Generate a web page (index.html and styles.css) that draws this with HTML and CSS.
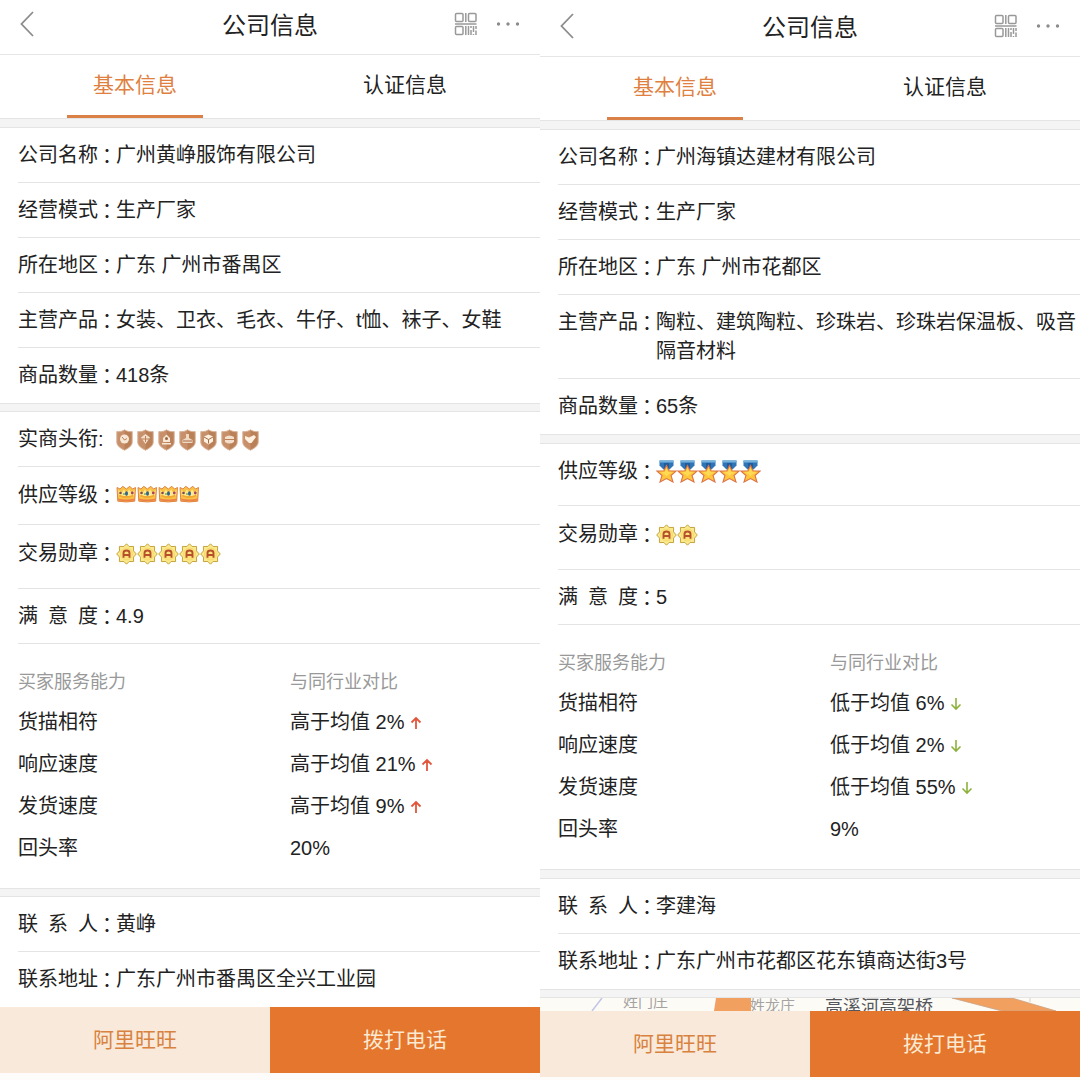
FILE: index.html
```html
<!DOCTYPE html>
<html lang="zh-CN">
<head>
<meta charset="utf-8">
<meta name="viewport" content="width=device-width, initial-scale=1">
<title>公司信息</title>
<link rel="stylesheet" href="styles.css">
</head>
<body>
<svg class="sprite" aria-hidden="true">
  <symbol id="back" viewBox="0 0 14 26"><path d="M13 1 1.500 13 13 25" fill="none" stroke="#8c8c8c" stroke-width="1.800"/></symbol>
  <symbol id="qr" viewBox="0 0 24 24">
    <g fill="none" stroke="#999" stroke-width="1.500">
      <rect x="1.500" y="1.500" width="7.500" height="8" rx="1"/><rect x="14.500" y="1.500" width="7.500" height="8" rx="1"/><rect x="1.500" y="14.500" width="7.500" height="8" rx="1"/>
      <path d="M11.800 1v9M1 12h21.500M11.800 14v9M14.500 14v9M17 14v2m0 2v5M19.500 14v6m0 2v1M22 14v3m0 1.500V23"/>
    </g>
  </symbol>
  <symbol id="dots" viewBox="0 0 24 6"><g fill="#8c8c8c"><circle cx="2.500" cy="3" r="1.700"/><circle cx="12" cy="3" r="1.700"/><circle cx="21.500" cy="3" r="1.700"/></g></symbol>
  <symbol id="up" viewBox="0 0 12 14"><path d="M6 13V2M1.500 6.500 6 2l4.500 4.500" fill="none" stroke="#e2563c" stroke-width="1.800"/></symbol>
  <symbol id="down" viewBox="0 0 12 14"><path d="M6 1v11M1.500 7.500 6 12l4.500-4.500" fill="none" stroke="#8cb23c" stroke-width="1.600"/></symbol>
  <symbol id="shield" viewBox="0 0 21 22">
    <path d="M8.500.8C6.500 2.300 3.500 3 .8 2.600V13c0 4 4 6.300 7.700 8.200 3.700-1.900 7.700-4.200 7.700-8.200V2.600C13.500 3 10.500 2.300 8.500.8Z" fill="#c8906a" stroke="#d9b296" stroke-width="1"/>
    <path d="M8.500 1.500c2 1.300 4.500 2 7 1.800V13c0 3.500-3.500 5.600-7 7.500Z" fill="#ba8058"/>
  </symbol>
  <symbol id="crown" viewBox="0 0 21 18">
    <path d="M1 2.500 4 4l2.800-2.700L10.300 4l3.500-2.700L16.500 4l3-1.500-.8 13.700q-8.400 1.500-16.900 0Z" fill="#f9c247" stroke="#e08545" stroke-width="1"/>
    <path d="M2.300 5 5.500 8 8 4.500 10.300 8l3-3.500L15.500 8l3-3-.6 6H3Z" fill="#ffe98b"/>
    <path d="M2 13.500q8.300 2 16.700 0l-.3 2q-8 1.300-16 0Z" fill="#ec8048"/>
    <path d="M3.200 10.500 8 12l5-.2 4.500-1.300" fill="none" stroke="#f2a832" stroke-width="1.800"/>
    <circle cx="4.500" cy="8" r="1.300" fill="#7b4a57"/><ellipse cx="10.500" cy="8.500" rx="1.500" ry="2.300" fill="#34618b"/><circle cx="16.300" cy="8" r="1.400" fill="#a64261"/><circle cx="8" cy="9" r="1" fill="#7eaa62"/>
  </symbol>
  <symbol id="seal" viewBox="0 0 21 22">
    <path d="m10.500.8 2.600 2.700 4.500-.1-.1 4.500 2.800 3.100-2.800 3.100.1 4.500-4.500-.1-2.600 2.700-2.600-2.700-4.500.1.100-4.500L.7 11l2.800-3.100-.1-4.500 4.500.1Z" fill="#fbe98e" stroke="#c4a43e" stroke-width="1"/>
    <circle cx="10.500" cy="11" r="6" fill="#ffe27a" stroke="#f1d76c" stroke-width=".8"/>
    <path d="M7.500 14.800V10q0-2.500 3-2.500t3 2.500v4.800M7.500 12h6" fill="none" stroke="#b4502b" stroke-width="1.900"/>
  </symbol>
  <symbol id="star" viewBox="0 0 21 23">
    <path d="M3.500.5h14v5l-4 4h-6l-4-4Z" fill="#2e75b8"/><path d="M3.500.5h14v2h-14Z" fill="#75b3dc"/><path d="M8 3h5v6H8Z" fill="#205c9b"/>
    <path d="m10.500 5.500 2.500 5.200 7 .4-5 4.400 2 6.500-6.500-3.500L4 22l2-6.500-5-4.400 7-.4Z" fill="#ffc63b" stroke="#dc7447" stroke-width="1.100"/>
    <path d="m10.500 8 1.500 4 4.500.5-4.500 2-1.500 2-1.500-2-4.500-2L9 12Z" fill="#ffdb55"/>
  </symbol>
</svg>

<main class="compare">
  <article class="phone">
    <header class="bar">
      <button class="icon-btn" type="button" aria-label="返回"><svg width="14" height="26"><use href="#back"/></svg></button>
      <h1 class="title">公司信息</h1>
      <div class="tools">
        <button class="icon-btn" type="button" aria-label="二维码"><svg width="24" height="24"><use href="#qr"/></svg></button>
        <button class="icon-btn" type="button" aria-label="更多"><svg width="24" height="6"><use href="#dots"/></svg></button>
      </div>
    </header>
    <nav class="tabs"><a class="tab active" href="#basic-1">基本信息</a><a class="tab" href="#cert-1">认证信息</a></nav>
    <div class="group" id="basic-1">
      <dl>
        <div class="row"><dt><span class="name">公司名称</span><span class="colon">：</span></dt><dd>广州黄峥服饰有限公司</dd></div>
        <div class="row"><dt><span class="name">经营模式</span><span class="colon">：</span></dt><dd>生产厂家</dd></div>
        <div class="row"><dt><span class="name">所在地区</span><span class="colon">：</span></dt><dd>广东 广州市番禺区</dd></div>
        <div class="row"><dt><span class="name">主营产品</span><span class="colon">：</span></dt><dd>女装、卫衣、毛衣、牛仔、t恤、袜子、女鞋</dd></div>
        <div class="row last"><dt><span class="name">商品数量</span><span class="colon">：</span></dt><dd>418条</dd></div>
      </dl>
    </div>
    <div class="group">
      <dl>
        <div class="row"><dt><span class="name">实商头衔</span><span class="half-colon">:</span></dt><dd class="badges">
          <svg width="21" height="22"><use href="#shield"/><circle cx="8.500" cy="10" r="4.500" fill="#f7e7d6"/><path d="m6 8 2.500 3L11 9.500" fill="none" stroke="#bd8056"/></svg>
          <svg width="21" height="22"><use href="#shield"/><path d="M4 8.500 8.500 5 13 8.500 8.500 15Z" fill="#f3dfcc"/><path d="M5 10h7M8.500 7v6" stroke="#bd8056"/></svg>
          <svg width="21" height="22"><use href="#shield"/><path d="M5 13V9l3.500-3.500L12 9v4ZM4 14h9v1.500H4Z" fill="#f7e7d6"/><circle cx="8.500" cy="9.500" r="1.500" fill="#9c6541"/></svg>
          <svg width="21" height="22"><use href="#shield"/><path d="M7 5h3v4l3.500 2v3h-10v-3L7 9Z" fill="#f0d9c3"/><path d="M4 12h9" stroke="#a66a42"/></svg>
          <svg width="21" height="22"><use href="#shield"/><path d="m8.500 5.500 4.500 2v5l-4.500 3-4.500-3v-5Z" fill="#fff0df"/><path d="m4 8 4.500 2.500L13 8M8.500 10.500v4" fill="none" stroke="#a66a42"/></svg>
          <svg width="21" height="22"><use href="#shield"/><path d="M4 8q4.500-3 9 0v5q-4.500 3-9 0Z" fill="#f3dfcc"/><path d="M4 10.500h9" stroke="#bd8056"/></svg>
          <svg width="21" height="22"><use href="#shield"/><path d="m3 7 4 1.500L12 6l2 2-4.500 6H7L3 10Z" fill="#fff0df"/></svg>
        </dd></div>
        <div class="row crown-row"><dt><span class="name">供应等级</span><span class="colon">：</span></dt><dd class="badges raised">
          <svg width="21" height="18"><use href="#crown"/></svg><svg width="21" height="18"><use href="#crown"/></svg><svg width="21" height="18"><use href="#crown"/></svg><svg width="21" height="18"><use href="#crown"/></svg>
        </dd></div>
        <div class="row medal-row"><dt><span class="name">交易勋章</span><span class="colon">：</span></dt><dd class="badges">
          <svg width="21" height="22"><use href="#seal"/></svg><svg width="21" height="22"><use href="#seal"/></svg><svg width="21" height="22"><use href="#seal"/></svg><svg width="21" height="22"><use href="#seal"/></svg><svg width="21" height="22"><use href="#seal"/></svg>
        </dd></div>
        <div class="row"><dt><span class="name spread">满 意 度</span><span class="colon">：</span></dt><dd>4.9</dd></div>
      </dl>
      <table class="stats">
        <thead><tr><th scope="col">买家服务能力</th><th scope="col">与同行业对比</th></tr></thead>
        <tbody>
          <tr><td>货描相符</td><td>高于均值 2% <svg class="arrow" width="12" height="14"><use href="#up"/></svg></td></tr>
          <tr><td>响应速度</td><td>高于均值 21% <svg class="arrow" width="12" height="14"><use href="#up"/></svg></td></tr>
          <tr><td>发货速度</td><td>高于均值 9% <svg class="arrow" width="12" height="14"><use href="#up"/></svg></td></tr>
          <tr><td>回头率</td><td>20%</td></tr>
        </tbody>
      </table>
    </div>
    <div class="group">
      <dl>
        <div class="row"><dt><span class="name spread">联 系 人</span><span class="colon">：</span></dt><dd>黄峥</dd></div>
        <div class="row last"><dt><span class="name">联系地址</span><span class="colon">：</span></dt><dd>广东广州市番禺区全兴工业园</dd></div>
      </dl>
    </div>
    <footer class="actions"><button class="action chat" type="button">阿里旺旺</button><button class="action call" type="button">拨打电话</button></footer>
  </article>

  <article class="phone lower">
    <header class="bar">
      <button class="icon-btn" type="button" aria-label="返回"><svg width="14" height="26"><use href="#back"/></svg></button>
      <h1 class="title">公司信息</h1>
      <div class="tools">
        <button class="icon-btn" type="button" aria-label="二维码"><svg width="24" height="24"><use href="#qr"/></svg></button>
        <button class="icon-btn" type="button" aria-label="更多"><svg width="24" height="6"><use href="#dots"/></svg></button>
      </div>
    </header>
    <nav class="tabs"><a class="tab active" href="#basic-2">基本信息</a><a class="tab" href="#cert-2">认证信息</a></nav>
    <div class="group" id="basic-2">
      <dl>
        <div class="row"><dt><span class="name">公司名称</span><span class="colon">：</span></dt><dd>广州海镇达建材有限公司</dd></div>
        <div class="row"><dt><span class="name">经营模式</span><span class="colon">：</span></dt><dd>生产厂家</dd></div>
        <div class="row"><dt><span class="name">所在地区</span><span class="colon">：</span></dt><dd>广东 广州市花都区</dd></div>
        <div class="row"><dt><span class="name">主营产品</span><span class="colon">：</span></dt><dd>陶粒、建筑陶粒、珍珠岩、珍珠岩保温板、吸音隔音材料</dd></div>
        <div class="row last"><dt><span class="name">商品数量</span><span class="colon">：</span></dt><dd>65条</dd></div>
      </dl>
    </div>
    <div class="group">
      <dl>
        <div class="row star-row"><dt><span class="name">供应等级</span><span class="colon">：</span></dt><dd class="badges">
          <svg width="21" height="23"><use href="#star"/></svg><svg width="21" height="23"><use href="#star"/></svg><svg width="21" height="23"><use href="#star"/></svg><svg width="21" height="23"><use href="#star"/></svg><svg width="21" height="23"><use href="#star"/></svg>
        </dd></div>
        <div class="row medal-row"><dt><span class="name">交易勋章</span><span class="colon">：</span></dt><dd class="badges">
          <svg width="21" height="22"><use href="#seal"/></svg><svg width="21" height="22"><use href="#seal"/></svg>
        </dd></div>
        <div class="row"><dt><span class="name spread">满 意 度</span><span class="colon">：</span></dt><dd>5</dd></div>
      </dl>
      <table class="stats">
        <thead><tr><th scope="col">买家服务能力</th><th scope="col">与同行业对比</th></tr></thead>
        <tbody>
          <tr><td>货描相符</td><td>低于均值 6% <svg class="arrow" width="12" height="14"><use href="#down"/></svg></td></tr>
          <tr><td>响应速度</td><td>低于均值 2% <svg class="arrow" width="12" height="14"><use href="#down"/></svg></td></tr>
          <tr><td>发货速度</td><td>低于均值 55% <svg class="arrow" width="12" height="14"><use href="#down"/></svg></td></tr>
          <tr><td>回头率</td><td>9%</td></tr>
        </tbody>
      </table>
    </div>
    <div class="group">
      <dl>
        <div class="row"><dt><span class="name spread">联 系 人</span><span class="colon">：</span></dt><dd>李建海</dd></div>
        <div class="row last"><dt><span class="name">联系地址</span><span class="colon">：</span></dt><dd>广东广州市花都区花东镇商达街3号</dd></div>
      </dl>
    </div>
    <div class="group map">
      <svg class="map-view" viewBox="0 0 540 13" preserveAspectRatio="xMidYMid slice">
        <path d="M176 0h35v13h-37Z" fill="#f2a060"/><path d="M412 0h60l44 13h-54Z" fill="#f2a060" stroke="#c9a184" stroke-width=".8"/>
        <path d="m62 0-10 13" stroke="#c3c4e6" stroke-width="1.500"/><path d="M490 0v4" fill="none" stroke="#dccfc4"/>
        <text class="map-minor" x="83" y="9">姓门庄</text>
        <text class="map-minor" x="210" y="13">姓龙庄</text>
        <text class="map-major" x="285" y="15">高溪河高架桥</text>
      </svg>
    </div>
    <footer class="actions"><button class="action chat" type="button">阿里旺旺</button><button class="action call" type="button">拨打电话</button></footer>
  </article>
</main>
</body>
</html>
```
FILE: styles.css
```css
*,
*::before { box-sizing: border-box; }

body {
  margin: 0;
  background: #fdfcfa;
  color: #222;
  font: 20px/29px "Liberation Sans", "Noto Sans CJK SC", sans-serif;
}

h1, dl, dd { margin: 0; }

button {
  padding: 0;
  border: 0;
  background: none;
  font: inherit;
}

svg { display: block; }

.sprite {
  position: absolute;
  width: 0;
  height: 0;
}

.compare {
  display: grid;
  grid-template-columns: 1fr 1fr;
  align-items: start;
}

.phone {
  min-width: 0;
  background: #fff;
}

.lower { padding-top: 2px; }

/* Title bar */
.bar {
  display: grid;
  grid-template-columns: 1fr auto 1fr;
  align-items: center;
  height: 55px;
  padding: 0 20px 6px;
  border-bottom: 1px solid #e6e6e6;
}

.icon-btn {
  display: flex;
  justify-self: start;
}

.title {
  font-size: 24px;
  font-weight: 400;
  line-height: 36px;
  padding-top: 4px;
}

.tools {
  display: flex;
  align-items: center;
  justify-self: end;
  gap: 18px;
}

/* Tabs */
.tabs {
  display: grid;
  grid-template-columns: 1fr 1fr;
  justify-items: center;
  height: 63px;
}

.tab {
  width: 136px;
  height: 63px;
  color: #222;
  font-size: 21px;
  line-height: 60px;
  text-align: center;
  text-decoration: none;
}

.active {
  border-bottom: 3px solid #da8147;
  color: #df8040;
}

/* Groups of rows, each with a grey band above */
.group::before {
  content: "";
  display: block;
  height: 9px;
  border: solid #e4e4e4;
  border-width: 1px 0;
  background: #f4f4f4;
}

.tabs + .group::before,
.lower .group::before { height: 10px; }

.lower .map::before { height: 9px; }

.row {
  display: flex;
  margin-left: 18px;
  padding: 13px 0 12px;
  border-bottom: 1px solid #e4e4e4;
}

.last { border-bottom-color: transparent; }

.row dt {
  display: flex;
  flex: none;
  width: 98px;
}

.row dd {
  flex: 1;
  min-width: 0;
}

.name { width: 80px; }

.spread { text-align-last: justify; }

.colon {
  display: flex;
  justify-content: center;
  width: 18px;
  font-family: "Noto Sans CJK TC", sans-serif;
}

.row .badges {
  display: flex;
  align-items: center;
  height: 29px;
}

.row .raised { padding-bottom: 4px; }

.crown-row { padding: 14px 0; }

.medal-row { padding: 14px 0 20px; }

.star-row { padding-bottom: 19px; }

/* Service statistics */
.stats {
  width: 100%;
  padding: 24px 0 19px 18px;
  border-collapse: separate;
  border-spacing: 0;
  table-layout: fixed;
}

.stats th,
.stats td {
  height: 42px;
  padding: 0;
  text-align: left;
}

.stats th {
  height: 33px;
  padding-bottom: 4px;
  color: #999;
  font-size: 18px;
  font-weight: 400;
}

.stats th:first-child { width: 272px; }

.arrow {
  display: inline-block;
  vertical-align: -1px;
}

/* Map strip */
.map { background: #fdfbf5; }

.map-view {
  width: 100%;
  height: 13px;
}

.map-minor {
  fill: #a5a2a2;
  font-size: 15px;
}

.map-major {
  fill: #55565c;
  font-size: 18px;
}

/* Bottom actions */
.actions {
  display: grid;
  grid-template-columns: 1fr 1fr;
}

.action {
  height: 66px;
  padding-bottom: 2px;
  font-size: 21px;
}

.chat {
  background: #f8e9da;
  color: #d9823f;
}

.call {
  background: #e4762d;
  color: #fbe9d2;
}
```
